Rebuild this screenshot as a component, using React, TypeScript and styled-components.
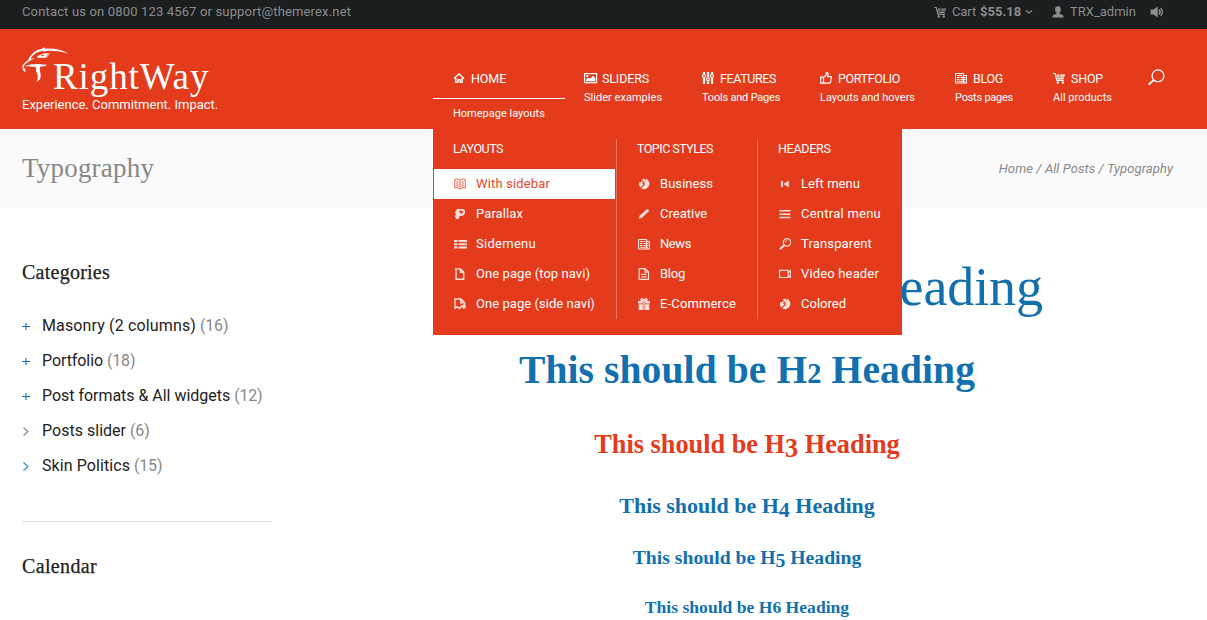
import React from 'react';
import styled, { createGlobalStyle } from 'styled-components';

const red = '#e33b1c';
const blue = '#1270ae';
const sans = 'Roboto, "Liberation Sans", sans-serif';
const serif = '"Liberation Serif", "Times New Roman", serif';

const GlobalStyle = createGlobalStyle`
  * { box-sizing: border-box; }
  body { margin: 0; background: #fff; font-family: ${sans}; overflow: hidden; }
  h1, h2, h3, h4, h5, h6, p, ul { margin: 0; padding: 0; }
  ul { list-style: none; }
  svg { display: block; flex: none; }
`;

const Page = styled.div`
  width: 1207px;
  height: 620px;
  overflow: hidden;
`;

const Label = styled.span<{ $ls?: number }>`
  letter-spacing: ${p => p.$ls ?? 0}px;
  white-space: nowrap;
`;

/* ---------- top bar ---------- */
const TopBar = styled.div`
  display: flex;
  height: 29px;
  padding: 0 43px 5px 22px;
  align-items: center;
  justify-content: space-between;
  background: #1a1e1f;
  color: #8b8d8d;
  font-size: 13px;
  line-height: 20px;
`;
const TopTools = styled.div`
  display: flex;
  align-items: center;
`;
const CartLink = styled.div`
  display: flex;
  align-items: center;
  width: 118px;
  svg:first-child { margin-right: 6px; }
  strong { margin: 0 4px; }
`;
const UserLink = styled.div`
  display: flex;
  align-items: center;
  gap: 6px;
  width: 98px;
`;

/* ---------- header ---------- */
const Header = styled.header`
  position: relative;
  display: flex;
  height: 100px;
  padding-left: 22px;
  background: ${red};
  color: #fff;
`;
const Brand = styled.div`
  width: 411px;
  padding-top: 18px;
`;
const LogoRow = styled.div`
  display: flex;
  height: 48px;
`;
const LogoText = styled.span`
  margin: 9px 0 0 -17px;
  font: 37px/42px ${serif};
  letter-spacing: 0.9px;
`;
const Tagline = styled.p`
  font-size: 13px;
  line-height: 20px;
`;
const Nav = styled.nav`
  display: flex;
  padding-top: 39px;
`;
const NavItem = styled.div<{ $width: number }>`
  width: ${p => p.$width}px;
`;
const NavTitle = styled.div<{ $open?: boolean }>`
  display: flex;
  height: ${p => (p.$open ? 31 : 20)}px;
  margin-bottom: ${p => (p.$open ? 7 : 2)}px;
  padding-left: ${p => (p.$open ? 20 : 19)}px;
  padding-bottom: ${p => (p.$open ? 10 : 0)}px;
  align-items: center;
  border-bottom: ${p => (p.$open ? '1px solid #fff' : '0')};
  font-size: 12.5px;
`;
const IconSlot = styled.span<{ $width: number }>`
  display: flex;
  flex: none;
  width: ${p => p.$width}px;
`;
const NavSub = styled.div<{ $open?: boolean }>`
  padding-left: ${p => (p.$open ? 20 : 19)}px;
  font-size: 11px;
  line-height: 16px;
`;
const SearchButton = styled.div`
  padding: 1px 0 0 16px;
`;

/* ---------- mega menu ---------- */
const MegaMenu = styled.div`
  position: absolute;
  z-index: 2;
  top: 100px;
  left: 433px;
  display: grid;
  grid-template-columns: 184px 141px 144px;
  height: 206px;
  padding: 10px 0 16px;
  background: ${red};
`;
const MenuColumn = styled.div<{ $divided?: boolean }>`
  padding-left: 1px;
  padding-right: ${p => (p.$divided ? 1 : 0)}px;
  border-right: ${p => (p.$divided ? '1px solid #ec7660' : '0')};
`;
const MenuHeading = styled.div`
  height: 30px;
  padding-left: 19px;
  font-size: 12.5px;
  line-height: 20px;
`;
const MenuEntry = styled.div<{ $active?: boolean }>`
  display: flex;
  align-items: center;
  height: 30px;
  padding: 0 0 2px 20px;
  background: ${p => (p.$active ? '#fff' : 'transparent')};
  color: ${p => (p.$active ? '#e5482c' : '#fff')};
  font-size: 13px;
  svg { margin-top: 1px; opacity: 0.85; }
`;

/* ---------- title bar ---------- */
const TitleBar = styled.div`
  display: flex;
  align-items: center;
  justify-content: space-between;
  height: 79px;
  padding: 0 34px 0 22px;
  background: #fafafa;
  color: #888;
`;
const PageTitle = styled.h1`
  margin-top: -1px;
  font: 27px/36px ${serif};
  letter-spacing: 0.2px;
`;
const Breadcrumbs = styled.div`
  font: italic 13px/20px ${sans};
  letter-spacing: 0.08px;
`;

/* ---------- content ---------- */
const Content = styled.div`
  display: flex;
  padding: 0 33px 0 22px;
`;
const Sidebar = styled.aside`
  width: 250px;
  padding-top: 50px;
`;
const WidgetTitle = styled.h5<{ $ls: number }>`
  font: 20px/28px ${serif};
  letter-spacing: ${p => p.$ls}px;
  color: #222;
  -webkit-text-stroke: 0.25px #222;
`;
const CategoryList = styled.ul`
  margin-top: 22px;
  padding-bottom: 38px;
  border-bottom: 1px solid #ddd;
`;
const Category = styled.li`
  display: flex;
  align-items: center;
  height: 35px;
  font-size: 16px;
  color: #222;
`;
const Count = styled.span`
  margin-left: 4px;
  letter-spacing: -0.2px;
  color: #888;
`;
const SecondWidget = styled.div`
  padding-top: 30px;
`;
const Article = styled.main`
  width: 854px;
  margin-left: 48px;
  padding-top: 49px;
  text-align: center;
`;
const Heading = styled.h2<{ $size: number; $line: number; $top?: number; $ls?: number; $light?: boolean; $color?: string }>`
  margin-top: ${p => p.$top ?? 0}px;
  font-family: ${serif};
  font-size: ${p => p.$size}px;
  line-height: ${p => p.$line}px;
  font-weight: ${p => (p.$light ? 400 : 700)};
  letter-spacing: ${p => p.$ls ?? 0}px;
  color: ${p => p.$color ?? blue};
  white-space: nowrap;
`;
const SmallDigit = styled.span`
  font-size: 0.72em;
  line-height: 0;
`;
const LowDigit = styled.span`
  line-height: 0;
  vertical-align: -0.17em;
`;

/* ---------- icons ---------- */
type IconName =
  | 'home' | 'image' | 'sliders' | 'thumb' | 'news' | 'cart' | 'book' | 'pinterest'
  | 'list' | 'file' | 'fileSide' | 'pie' | 'pencil' | 'doc' | 'gift' | 'back'
  | 'lines' | 'magnifier' | 'video';

const line = { fill: 'none', stroke: 'currentColor', strokeWidth: 1.2 };

const shapes: Record<IconName, React.ReactNode> = {
  home: <g {...line} strokeWidth={1.4}><path d="M1 6.6 6 2l5 4.6" /><path d="M2.8 6v4.4h2.1V7.8h2.2v2.6h2.1V6" /></g>,
  image: <><path {...line} d="M.6 1.6h12v9H.6z" /><path fill="currentColor" d="M2 9.3V7.5l2.2-1.7 1.5 1L9 3.8l2.4 2.5v3zM2.3 3h1.9v1.9H2.3z" /></>,
  sliders: <g {...line}><path d="M2 0v2M2 6v6M6 0v5M6 9.5V12M10 0v2M10 6v6" strokeWidth={2.2} /><circle cx="2" cy="4" r="1.5" /><circle cx="6" cy="7.3" r="1.5" /><circle cx="10" cy="4" r="1.5" /></g>,
  thumb: <path {...line} d="M.7 5.2h2.8v6H.7zM3.5 5.7 6.2 3V.8h1.4l.7.8-.6 3.1h3.7l-.2 2.2-.7 3.6-1 .7H5.2l-1.7-.8" />,
  news: <><path {...line} d="M.5 1.5h8v9.5H.5zM.5 11h11V3.500h-3" /><path {...line} strokeWidth={1} d="M2 3.500h5M2 5.500h2.500M5.500 5.500h5M2 7.500h2.500M5.500 7.500h5M2 9.300h8" /></>,
  cart: <><path {...line} d="M0 1.5h2.3l1.5 6.8h7" /><path fill="currentColor" d="M3.6 2.5h3v1.2h-3zM7.2 2.5H12v1.2H7.2zM4 4.3h2.6v1.2H4.2zM7.2 4.3h4.3l-.3 1.2h-4zM4.6 6.1h6.3l-.3 1.2H4.8z" /><circle cx="4.8" cy="10.5" r="1.2" fill="currentColor" /><circle cx="9.8" cy="10.5" r="1.2" fill="currentColor" /></>,
  book: <g {...line} strokeWidth={1}><path d="M.8 1.3 3.2.8 6 2.1 8.8.8l2.4.5v8.8l-2.4-.6L6 11.2 3.2 9.5l-2.4.6zM6 2.3v8.4" /><path d="m2.2 3.6 2.3.8M2.2 5.6l2.3.8M2.2 7.5l2.3.8M9.8 3.6l-2.3.8M9.8 5.6l-2.3.8M9.8 7.5l-2.3.8" /></g>,
  pinterest: <path fill="currentColor" fillRule="evenodd" d="M3.2 1h5.1c2 0 3.1 1.3 2.8 3.2C10.8 6.8 9.3 8 7.1 8H5.6L4.7 11H1.5l.5-2H.7L2 6 .9 4.6zM5.2 2.8 5 4.200h1.600l-.3 1.500h.8c1 0 1.700-.6 1.800-1.600.1-.9-.4-1.300-1.400-1.300z" />,
  list: <path fill="currentColor" d="M0 2h3.5v2H0zM4.5 2H13v2H4.5zM0 5.2h3.5v2H0zM4.5 5.2H13v2H4.5zM0 8.4h3.5v2H0zM4.5 8.4H13v2H4.5z" />,
  file: <path {...line} strokeWidth={1.4} d="M2 .9h4.6L9.7 4v7.300H2zM6.400.9v3.300h3.300" />,
  fileSide: <path {...line} strokeWidth={1.4} d="M1 10.700V1h5.800L10.600 4.500v6M6.800 1v3.700h3.800M1 10.700l2.200-2 2.400 1.800L7.400 8.500M7 8.300h3.800M8.800 6.600l2.300 1.700L8.800 10.400" />,
  pie: <path fill="currentColor" d="M7.7.8A5.300 5.300 0 1 1 3.200 10.300L6.600 7zM4.900.9 6.900.800V5.600L3.900 1.600zM3.200 2.200 5.600 5.800 3 4.600zM1.800 3.700 5.500 6.600 2.400 9.600A5 5 0 0 1 1.800 3.700z" />,
  pencil: <path fill="currentColor" d="m.8 10.7 1-3.2L8.7 1.5c1-.8 2.8.8 1.9 1.9L3.9 9.8z" />,
  doc: <path {...line} d="M1.2.7h6l3.3 3.2v7.5H1.2zM7 .7v3.4h3.5M3.2 6.3h5.3M3.2 8.8h5.3" />,
  gift: <><path fill="currentColor" d="M0 3h4.8v2.5H0zM7.2 3H12v2.5H7.2zM.7 6.300h4.100V12H.7zM7.2 6.300h4.100V12H7.2zM5.400 3.500h1.200V12H5.400z" /><path {...line} d="M6 3C3.500 3 2.400 2.300 3 1.200S5.600.9 6 3c.4-2.100 2.400-2.900 3-1.800S8.500 3 6 3z" /></>,
  back: <path fill="currentColor" d="M2 3h1.9v6H2zM9.8 2.700v6.600L4.300 6z" />,
  lines: <path fill="currentColor" d="M.5 2h11v1.5H.5zM.5 5.4h11v1.5H.5zM.5 8.8h11v1.5H.5z" />,
  magnifier: <g {...line}><circle cx="8" cy="4.4" r="3.7" /><path d="M6.3 4.5c0-1.200.7-1.900 1.900-1.900" strokeWidth=".8" /><path d="m5.300 7.200-4.500 4" strokeWidth="2" /></g>,
  video: <path {...line} d="M.6 2.3h8.6v7.200H.6zM9.300 4.700 11.700 2.500v6.900L9.300 7.200" />,
};

const Icon = ({ name, width = 12, height = 12 }: { name: IconName; width?: number; height?: number }) => (
  <svg width={width} height={height} viewBox={`0 0 ${width} ${height}`}>{shapes[name]}</svg>
);

const Eagle = () => (
  <svg width="48" height="38" viewBox="0 0 144 114" fill="#fff">
    <path d="M19 38C26 20 42 8 60 5l7-4 2 4c26-2 51 3 72 16-23-8-47-11-68-9l-8 3-1-4C46 14 31 22 26 36l14-3C27 39 12 47 6 57L4 66l6-2v12C2 72 0 65 2 55 6 48 12 45 19 38Z" />
    <path d="M44 29c12-8 26-11 42-11l-12 4 11 2-13 2 6 4-12 3-8-1-14 1 6-4z" />
    <path d="m57 25 8-2 1 4-6 1z" fill={red} />
    <path d="M8 58c17-8 37-9 66-5l-2 4-18 2c-3 13 6 25 0 38l-11 9c6-13 6-20 1-29-3-6-2-10-2-16-11-3-22-3-34-3z" />
  </svg>
);

interface NavEntry { title: string; sub: string; icon: IconName; width: number; slot: number; ls: number; subLs: number; open?: boolean; iconWidth?: number }
const navigation: NavEntry[] = [
  { title: 'HOME', sub: 'Homepage layouts', icon: 'home', width: 132, slot: 18, ls: -0.1, subLs: 0, open: true },
  { title: 'SLIDERS', sub: 'Slider examples', icon: 'image', width: 118, slot: 18, ls: -0.14, subLs: 0.03, iconWidth: 14 },
  { title: 'FEATURES', sub: 'Tools and Pages', icon: 'sliders', width: 118, slot: 18, ls: -0.4, subLs: -0.2 },
  { title: 'PORTFOLIO', sub: 'Layouts and hovers', icon: 'thumb', width: 135, slot: 18, ls: -0.38, subLs: 0 },
  { title: 'BLOG', sub: 'Posts pages', icon: 'news', width: 98, slot: 18, ls: -0.3, subLs: -0.24 },
  { title: 'SHOP', sub: 'All products', icon: 'cart', width: 98, slot: 18, ls: -0.2, subLs: 0.03 },
];

type Entry = [string, IconName, number];
const menu: { heading: string; ls: number; slot: number; entries: Entry[] }[] = [
  {
    heading: 'LAYOUTS', ls: -0.46, slot: 22,
    entries: [['With sidebar', 'book', 0.15], ['Parallax', 'pinterest', 0.09], ['Sidemenu', 'list', 0.28], ['One page (top navi)', 'file', 0.07], ['One page (side navi)', 'fileSide', 0.05]],
  },
  {
    heading: 'TOPIC STYLES', ls: -0.51, slot: 22,
    entries: [['Business', 'pie', 0.05], ['Creative', 'pencil', 0], ['News', 'news', -0.4], ['Blog', 'doc', -0.24], ['E-Commerce', 'gift', 0.15]],
  },
  {
    heading: 'HEADERS', ls: -0.3, slot: 22,
    entries: [['Left menu', 'back', 0.05], ['Central menu', 'lines', 0.25], ['Transparent', 'magnifier', 0.15], ['Video header', 'video', 0.16], ['Colored', 'pie', 0]],
  },
];

const categories: { name: string; count: number; ls: number; marker: 'plus' | 'arrow'; color: string }[] = [
  { name: 'Masonry (2 columns)', count: 16, ls: 0.14, marker: 'plus', color: blue },
  { name: 'Portfolio', count: 18, ls: -0.08, marker: 'plus', color: blue },
  { name: 'Post formats & All widgets', count: 12, ls: -0.03, marker: 'plus', color: blue },
  { name: 'Posts slider', count: 6, ls: 0.02, marker: 'arrow', color: '#6f8ba6' },
  { name: 'Skin Politics', count: 15, ls: 0.08, marker: 'arrow', color: '#2e8bc6' },
];

export default function App() {
  return (
    <Page>
      <GlobalStyle />
      <TopBar>
        <Label $ls={0.155}>Contact us on 0800 123 4567 or support@themerex.net</Label>
        <TopTools>
          <CartLink>
            <Icon name="cart" />
            <Label $ls={-0.1}>Cart</Label>
            <strong>$55.18</strong>
            <svg width="8" height="6" viewBox="0 0 8 6" {...line}><path d="m1 1.5 3 2.5 3-2.5" /></svg>
          </CartLink>
          <UserLink>
            <svg width="12" height="12" viewBox="0 0 12 12" fill="currentColor">
              <path d="M6 .3c2 0 2.9 1.2 2.9 3.1C8.9 5 8.3 6 7.5 6.8v1l3.4 1.3.9 2.4H.2l.9-2.4 3.4-1.3v-1C3.7 6 3.1 5 3.1 3.4 3.1 1.500 4 .3 6 .3z" />
            </svg>
            <Label>TRX_admin</Label>
          </UserLink>
          <svg width="14" height="12" viewBox="0 0 14 12" fill="currentColor">
            <path d="M.5 3.500h3L7.700.5v11L3.500 8.500h-3z" />
            <path d="M9 3.600c1.200 1.400 1.200 3.400 0 4.800M10.700 2c2 2.300 2 5.700 0 8" fill="none" stroke="currentColor" strokeWidth="1.5" />
          </svg>
        </TopTools>
      </TopBar>

      <Header>
        <Brand>
          <LogoRow><Eagle /><LogoText>RightWay</LogoText></LogoRow>
          <Tagline>Experience. Commitment. Impact.</Tagline>
        </Brand>
        <Nav>
          {navigation.map(item => (
            <NavItem key={item.title} $width={item.width}>
              <NavTitle $open={item.open}>
                <IconSlot $width={item.slot}><Icon name={item.icon} width={item.iconWidth} /></IconSlot>
                <Label $ls={item.ls}>{item.title}</Label>
              </NavTitle>
              <NavSub $open={item.open}><Label $ls={item.subLs}>{item.sub}</Label></NavSub>
            </NavItem>
          ))}
          <SearchButton>
            <svg width="17" height="17" viewBox="0 0 17 17" fill="none" stroke="#fff" strokeWidth="1.3">
              <circle cx="10" cy="6.8" r="5.9" />
              <path d="M5.8 11 .6 15.6" strokeWidth="1.8" />
            </svg>
          </SearchButton>
        </Nav>
        <MegaMenu>
          {menu.map((column, index) => (
            <MenuColumn key={column.heading} $divided={index < 2}>
              <MenuHeading><Label $ls={column.ls}>{column.heading}</Label></MenuHeading>
              {column.entries.map(([name, icon, ls]) => (
                <MenuEntry key={name} $active={name === 'With sidebar'}>
                  <IconSlot $width={column.slot}><Icon name={icon} width={icon === 'list' ? 13 : 12} /></IconSlot>
                  <Label $ls={ls}>{name}</Label>
                </MenuEntry>
              ))}
            </MenuColumn>
          ))}
        </MegaMenu>
      </Header>

      <TitleBar>
        <PageTitle>Typography</PageTitle>
        <Breadcrumbs>Home / All Posts / Typography</Breadcrumbs>
      </TitleBar>

      <Content>
        <Sidebar>
          <WidgetTitle $ls={0.25}>Categories</WidgetTitle>
          <CategoryList>
            {categories.map(item => (
              <Category key={item.name}>
                <IconSlot $width={20}>
                  <svg width="8" height="10" viewBox="0 0 8 10" fill="none" stroke={item.color} strokeWidth="1.1">
                    <path d={item.marker === 'plus' ? 'M0 5.5h8M4 2v7' : 'm1.5 1.5 4.5 4-4.5 4'} />
                  </svg>
                </IconSlot>
                <Label $ls={item.ls}>{item.name}</Label>
                <Count>({item.count})</Count>
              </Category>
            ))}
          </CategoryList>
          <SecondWidget><WidgetTitle $ls={0.35}>Calendar</WidgetTitle></SecondWidget>
        </Sidebar>
        <Article>
          <Heading as="h1" $size={54} $line={60} $ls={-0.08} $light>This should be H1 Heading</Heading>
          <Heading $size={39.5} $line={50} $top={28} $ls={0.11}>This should be H<SmallDigit>2</SmallDigit> Heading</Heading>
          <Heading as="h3" $size={26.3} $line={36} $top={32} $color={red}>This should be H<LowDigit>3</LowDigit> Heading</Heading>
          <Heading as="h4" $size={22} $line={30} $top={28}>This should be H<LowDigit>4</LowDigit> Heading</Heading>
          <Heading as="h5" $size={19.7} $line={28} $top={22}>This should be H<LowDigit>5</LowDigit> Heading</Heading>
          <Heading as="h6" $size={17.6} $line={26} $top={23}>This should be H6 Heading</Heading>
        </Article>
      </Content>
    </Page>
  );
}
